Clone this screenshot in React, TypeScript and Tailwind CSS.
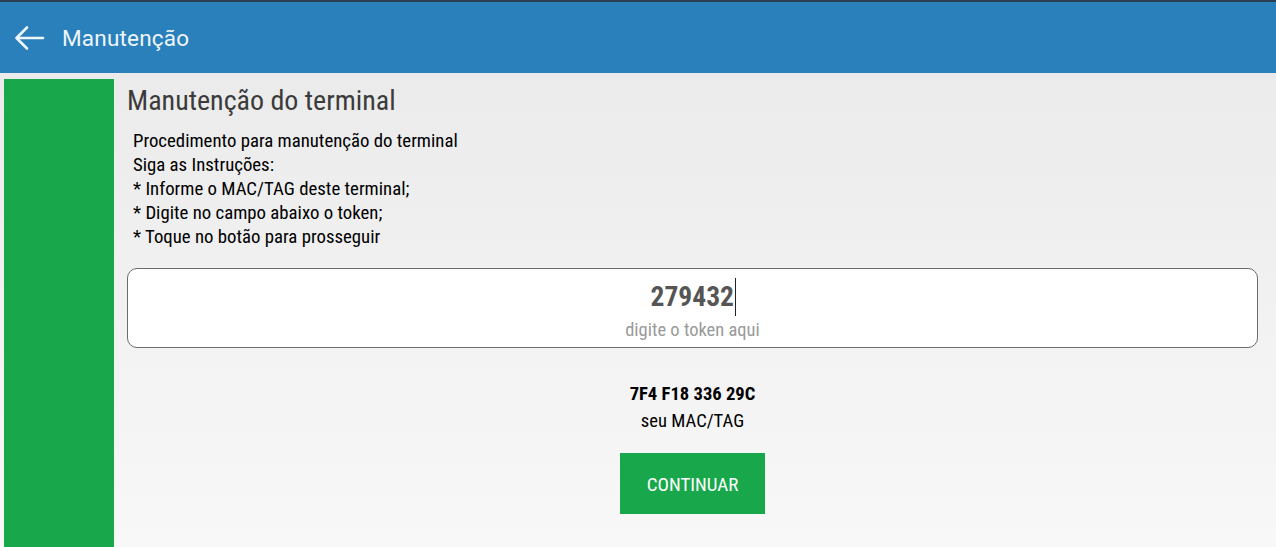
const cond = { fontFamily: '"Roboto Condensed", "Liberation Sans Narrow", Roboto, sans-serif' };

export default function App() {
  return (
    <div className="w-[1276px] h-[547px] overflow-hidden flex flex-col bg-[#2c3e50]" style={{ fontFamily: 'Roboto, "Noto Sans", sans-serif' }}>
      {/* top bar */}
      <header className="mt-[2px] h-[71px] shrink-0 bg-[#2980ba] flex items-center px-[14px] gap-[17px] text-[#eef5fb]">
        <svg width="31" height="26" viewBox="0 0 31 26" fill="none" stroke="currentColor" strokeWidth="2.6" strokeLinecap="round" strokeLinejoin="round">
          <path d="M29 13H3" />
          <path d="M13 2.5L2.5 13L13 23.5" />
        </svg>
        <span className="text-[22.5px] tracking-[0.2px] mt-[2px]">Manutenção</span>
      </header>

      <div className="flex-1 flex pt-[6px] pl-[4px] bg-gradient-to-b from-[#ebebeb] to-[#f8f8f8]">
        <aside className="w-[110px] shrink-0 bg-[#18a84b]" />

        <main className="flex-1 pl-[13px] pr-[18px] pt-[4px] flex flex-col" style={cond}>
          <h1 className="text-[28px] text-[#3b3b3b] leading-[36px]">Manutenção do terminal</h1>
          <div className="mt-[10px] pl-[6px] text-[18.8px] leading-[24px] text-black">
            <p>Procedimento para manutenção do terminal</p>
            <p>Siga as Instruções:</p>
            <p>* Informe o MAC/TAG deste terminal;</p>
            <p>* Digite no campo abaixo o token;</p>
            <p>* Toque no botão para prosseguir</p>
          </div>

          <div className="mt-[19px] h-[80px] rounded-[10px] border border-[#6b6b6b] bg-white flex flex-col items-center pt-[9px]">
            <div className="flex items-center pl-[2px]">
              <span className="text-[27.5px] font-bold text-[#555] leading-[34px] mr-[1px]">279432</span>
              <span className="w-[1.5px] h-[38px] bg-[#222]" />
            </div>
            <span className="text-[18.5px] text-[#9a9a9a] leading-[22px] mt-[3px]">digite o token aqui</span>
          </div>

          <div className="mt-[32px] flex flex-col items-center text-black">
            <span className="text-[18.6px] font-bold leading-[26px] mt-[1px]">7F4 F18 336 29C</span>
            <span className="text-[18.6px] leading-[26px] mt-[1px]">seu MAC/TAG</span>
            <button className="mt-[19px] w-[145px] h-[61px] bg-[#18a84b] text-white text-[19px] pt-[3px]">CONTINUAR</button>
          </div>
        </main>
      </div>
    </div>
  );
}
